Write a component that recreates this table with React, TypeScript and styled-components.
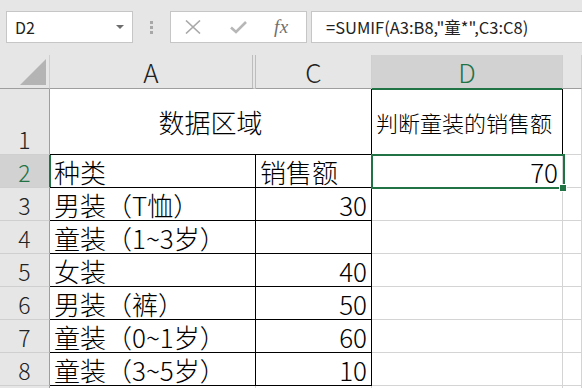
import React from "react";
import styled, { createGlobalStyle } from "styled-components";

const GREEN = "#217346";
const GRID = "#d4d4d4";
const INK = "#000";
const CJK = `"Noto Sans CJK SC", "Noto Sans", sans-serif`;

const GlobalStyle = createGlobalStyle`
  html, body {
    margin: 0;
    padding: 0;
    background: #fff;
    overflow: hidden;
  }
`;

const Window = styled.div`
  width: 582px;
  height: 388px;
  overflow: hidden;
  display: flex;
  flex-direction: column;
  font-family: ${CJK};
`;

/* ---------- formula bar ---------- */

const FormulaBar = styled.div`
  height: 55px;
  flex: none;
  box-sizing: border-box;
  background: #e6e6e6;
  display: flex;
  align-items: flex-start;
  padding: 11px 0 0 6px;
`;

const NameBox = styled.div`
  width: 127px;
  height: 32px;
  box-sizing: border-box;
  background: #fff;
  border: 1px solid #c6c6c6;
  display: flex;
  align-items: center;
  justify-content: space-between;
  padding: 0 8px 0 8px;
  font-size: 16px;
  color: #222;
`;

const DropArrow = styled.span`
  width: 0;
  height: 0;
  border-left: 4px solid transparent;
  border-right: 4px solid transparent;
  border-top: 4px solid #6d6d6d;
`;

const Grip = styled.div`
  width: 37px;
  height: 32px;
  display: flex;
  flex-direction: column;
  align-items: center;
  justify-content: center;
  gap: 2px;

  span {
    width: 3px;
    height: 3px;
    background: #a8a8a8;
  }
`;

const ActionBox = styled.div`
  width: 137px;
  height: 32px;
  box-sizing: border-box;
  background: #fff;
  border: 1px solid #c6c6c6;
  display: flex;
  align-items: center;
  padding-left: 14px;
  gap: 29px;
`;

const Fx = styled.span`
  font-family: "Liberation Serif", serif;
  font-style: italic;
  font-size: 19px;
  color: #6f6f6f;
  margin-left: -2px;
  letter-spacing: 0.5px;
`;

const FormulaInput = styled.div`
  flex: 1;
  margin-left: 4px;
  height: 32px;
  box-sizing: border-box;
  background: #fff;
  border: 1px solid #c6c6c6;
  border-right: none;
  display: flex;
  align-items: center;
  padding-left: 14px;
  font-size: 16.5px;
  color: #222;
  white-space: nowrap;
`;

/* ---------- grid ---------- */

const Sheet = styled.div`
  position: relative;
  display: grid;
  grid-template-columns: 50px 206px 116px 191px 1fr;
  grid-template-rows: 34px 66px repeat(8, 33px);
`;

const Corner = styled.div`
  background: #e6e6e6;
  border-right: 1px solid #cfcfcf;
  border-bottom: 1px solid #9e9e9e;
  display: flex;
  align-items: flex-end;
  justify-content: flex-end;
  padding: 0 3px 3px 0;

  &::after {
    content: "";
    width: 0;
    height: 0;
    border-left: 26px solid transparent;
    border-bottom: 26px solid #b4b4b4;
  }
`;

const ColHead = styled.div<{ $selected?: boolean; $hidden?: boolean }>`
  background: ${(p) => (p.$selected ? "#d2d2d2" : "#e6e6e6")};
  color: ${(p) => (p.$selected ? GREEN : "#222")};
  border-right: ${(p) => (p.$hidden ? "4px double #bdbdbd" : "1px solid #cfcfcf")};
  border-bottom: ${(p) => (p.$selected ? `2px solid ${GREEN}` : "1px solid #9e9e9e")};
  margin-bottom: ${(p) => (p.$selected ? "-1px" : "0")};
  display: flex;
  align-items: flex-start;
  justify-content: center;
  font-size: 26px;
  font-weight: 300;
  line-height: 33px;
`;

const RowHead = styled.div<{ $selected?: boolean }>`
  background: ${(p) => (p.$selected ? "#d2d2d2" : "#e6e6e6")};
  color: ${(p) => (p.$selected ? GREEN : "#222")};
  border-right: ${(p) => (p.$selected ? `2px solid ${GREEN}` : "1px solid #9e9e9e")};
  margin-right: ${(p) => (p.$selected ? "-1px" : "0")};
  border-bottom: 1px solid #cfcfcf;
  display: flex;
  align-items: flex-end;
  justify-content: center;
  font-size: 23px;
  font-weight: 300;
  line-height: 30px;
`;

const Cell = styled.div<{
  $align?: "left" | "right" | "center";
  $right?: string;
  $bottom?: string;
  $span?: number;
  $size?: number;
  $middle?: boolean;
}>`
  grid-column: ${(p) => (p.$span ? `span ${p.$span}` : "auto")};
  border-right: 1px solid ${(p) => p.$right ?? GRID};
  border-bottom: 1px solid ${(p) => p.$bottom ?? GRID};
  display: flex;
  align-items: ${(p) => (p.$middle ? "center" : "flex-end")};
  justify-content: ${(p) =>
    p.$align === "right" ? "flex-end" : p.$align === "center" ? "center" : "flex-start"};
  padding: 0 4px;
  font-size: ${(p) => p.$size ?? 26}px;
  font-weight: 300;
  line-height: ${(p) => (p.$middle ? "normal" : "31px")};
  color: ${INK};
  white-space: nowrap;
`;

const Selection = styled.div`
  position: absolute;
  left: 371px;
  top: 99px;
  width: 194px;
  height: 35px;
  box-sizing: border-box;
  border: 2px solid ${GREEN};
  pointer-events: none;

  &::after {
    content: "";
    position: absolute;
    right: -3px;
    bottom: -4px;
    width: 6px;
    height: 6px;
    background: ${GREEN};
    box-shadow: 0 0 0 1px #fff;
  }
`;

const rows = [
  { n: 3, kind: "男装（T恤）", amount: "30" },
  { n: 4, kind: "童装（1~3岁）", amount: "" },
  { n: 5, kind: "女装", amount: "40" },
  { n: 6, kind: "男装（裤）", amount: "50" },
  { n: 7, kind: "童装（0~1岁）", amount: "60" },
  { n: 8, kind: "童装（3~5岁）", amount: "10" },
];

const CancelIcon = () => (
  <svg width="16" height="14" viewBox="0 0 16 14">
    <path d="M1 0.5 L15 13.5 M15 0.5 L1 13.5" stroke="#a9a9a9" strokeWidth="1.6" fill="none" />
  </svg>
);

const EnterIcon = () => (
  <svg width="17" height="13" viewBox="0 0 17 13">
    <path d="M1 6.5 L6 11 L16 1" stroke="#b7b7b7" strokeWidth="2.6" fill="none" />
  </svg>
);

export default function App() {
  return (
    <>
      <GlobalStyle />
      <Window>
        <FormulaBar>
          <NameBox>
            D2
            <DropArrow />
          </NameBox>
          <Grip>
            <span />
            <span />
            <span />
          </Grip>
          <ActionBox>
            <CancelIcon />
            <EnterIcon />
            <Fx>fx</Fx>
          </ActionBox>
          <FormulaInput>=SUMIF(A3:B8,"童*",C3:C8)</FormulaInput>
        </FormulaBar>

        <Sheet>
          <Corner />
          <ColHead $hidden>A</ColHead>
          <ColHead>C</ColHead>
          <ColHead $selected>D</ColHead>
          <ColHead />

          <RowHead>1</RowHead>
          <Cell $span={2} $align="center" $middle $right={INK} $bottom={INK}>
            数据区域
          </Cell>
          <Cell $middle $size={22} $right={INK} $bottom={INK}>
            判断童装的销售额
          </Cell>
          <Cell />

          <RowHead $selected>2</RowHead>
          <Cell $right={INK} $bottom={INK}>种类</Cell>
          <Cell $right={INK} $bottom={INK}>销售额</Cell>
          <Cell $align="right">70</Cell>
          <Cell />

          {rows.map((r) => (
            <React.Fragment key={r.n}>
              <RowHead>{r.n}</RowHead>
              <Cell $right={INK} $bottom={INK}>{r.kind}</Cell>
              <Cell $align="right" $right={INK} $bottom={INK}>{r.amount}</Cell>
              <Cell />
              <Cell />
            </React.Fragment>
          ))}

          {/* row 9 only peeks in at the bottom edge */}
          <RowHead />
          <Cell />
          <Cell />
          <Cell />
          <Cell />

          <Selection />
        </Sheet>
      </Window>
    </>
  );
}
